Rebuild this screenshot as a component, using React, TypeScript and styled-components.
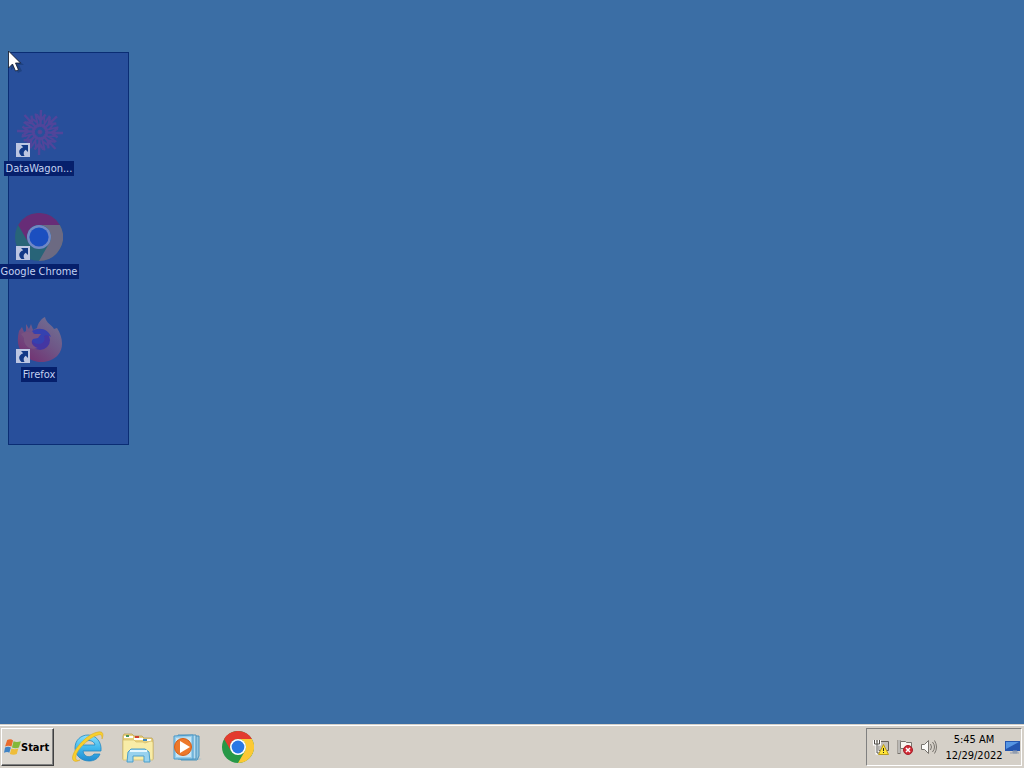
import React from "react";
import styled, { createGlobalStyle } from "styled-components";

const GlobalStyle = createGlobalStyle`
  * { box-sizing: border-box; }
  body { margin: 0; overflow: hidden; background: #3b6ea5; }
  button, a { font: inherit; color: inherit; }
`;

const Screen = styled.div`
  display: flex;
  flex-direction: column;
  height: 100vh;
  font-family: "DejaVu Sans Condensed", Tahoma, sans-serif;
  font-size: 11px;
  line-height: 15px;
`;

const Desktop = styled.main`
  position: relative;
  flex: 1;
  min-height: 0;
  background: #3b6ea5;
`;

const Marquee = styled.div`
  position: absolute;
  left: 8px;
  top: 52px;
  width: 121px;
  height: 393px;
  background: #284f9b;
  border: 1px solid #0a2d74;
`;

const Pointer = styled.svg`
  position: absolute;
  left: 8px;
  top: 50px;
  width: 16px;
  height: 24px;
`;

const Shortcuts = styled.nav`
  position: relative;
  display: flex;
  flex-direction: column;
  align-items: flex-start;
  gap: 37px;
  padding-top: 110px;
`;

const Shortcut = styled.a`
  display: flex;
  flex-direction: column;
  align-items: center;
  gap: 3px;
  width: 78px;
  text-decoration: none;
`;

const ShortcutIcon = styled.svg`
  width: 48px;
  height: 48px;
`;

const ShortcutLabel = styled.span`
  padding: 0 2px;
  white-space: nowrap;
  color: #c3d2f2;
  background: #06206c;
`;

const Taskbar = styled.footer`
  display: flex;
  align-items: stretch;
  height: 44px;
  padding: 3px 2px 2px 1px;
  background: #d5d0c8;
  border-top: 1px solid #d5d0c8;
  box-shadow: inset 0 1px #ffffff;
`;

const StartButton = styled.button`
  display: flex;
  align-items: center;
  width: 53px;
  padding: 0 2px;
  font-weight: bold;
  color: #000;
  background: #dad6cf;
  border: 1px solid;
  border-color: #fff #404040 #404040 #fff;
  box-shadow: inset -1px -1px #808080;
`;

const StartLogo = styled.svg`
  flex: none;
  width: 17px;
  height: 17px;
`;

const QuickLaunch = styled.div`
  display: flex;
  align-items: center;
  gap: 18px;
  margin-left: 18px;
`;

const LaunchButton = styled.button`
  display: flex;
  width: 32px;
  height: 32px;
  padding: 0;
  border: 0;
  background: none;
  svg { width: 32px; height: 32px; }
`;

const Tray = styled.div`
  display: flex;
  align-items: center;
  margin-left: auto;
  padding-left: 6px;
  border: 1px solid;
  border-color: #808080 #fff #fff #808080;
`;

const TrayIcons = styled.div`
  display: flex;
  gap: 8px;
`;

const TrayButton = styled.button`
  display: flex;
  width: 16px;
  height: 16px;
  padding: 0;
  border: 0;
  background: none;
  svg { width: 16px; height: 16px; }
`;

const Clock = styled.time`
  width: 58px;
  margin: 2px 2px 0 8px;
  line-height: 16px;
  text-align: center;
  color: #000;
`;

const ShortcutBadge = () => (
  <g>
    <path d="M1 33h14v14H1z" fill="#bcc6e2" />
    <path d="M6 35h7v7l-2.300-2.300C8.500 41 8 43.500 9.500 46H6.500C3 43 3.500 39 8.200 37.300z" fill="#123987" />
  </g>
);

const DataWagonIcon = () => (
  <ShortcutIcon viewBox="0 0 48 48" aria-hidden="true">
    <g stroke="#67409a" fill="none" opacity=".65">
      {Array.from({ length: 16 }, (_, i) => (
        <g key={i} transform={`rotate(${i * 22.5 + 5} 25 22)`}>
          <path
            d={i % 2 ? "M25 17l1-14m-1 9l-4-6m4 2l3-4" : "M25 17l-1-18m1 12l-4-5m4 4l4-6"}
            strokeWidth={i % 2 ? 1.8 : 2.4}
          />
        </g>
      ))}
      <circle cx="25" cy="22" r="7" strokeWidth="2.5" />
      <circle cx="25" cy="22" r="2" fill="#74418e" />
    </g>
    <ShortcutBadge />
  </ShortcutIcon>
);

const ChromeShape = ({ faded }: { faded?: boolean }) => {
  const [red, yellow, green, ring, blue] = faded
    ? ["#672c77", "#6c6a82", "#286478", "#7188c5", "#1b4fc0"]
    : ["#e33b2e", "#fcc934", "#279847", "#ffffff", "#2878e5"];
  return (
    <>
      <circle cx="24" cy="24" r="24" fill={green} />
      <path d="M3.2 12A24 24 0 0 1 44.8 12H24a12 12 0 0 0-10.4 18z" fill={red} />
      <path d="M24 12h20.8A24 24 0 0 1 24 48l10.4-18A12 12 0 0 0 24 12z" fill={yellow} />
      <circle cx="24" cy="24" r="12" fill={ring} />
      <circle cx="24" cy="24" r="9.6" fill={blue} />
    </>
  );
};

const ChromeShortcutIcon = () => (
  <ShortcutIcon viewBox="0 0 48 48" aria-hidden="true">
    <ChromeShape faded />
    <ShortcutBadge />
  </ShortcutIcon>
);

const FirefoxIcon = () => (
  <ShortcutIcon viewBox="0 0 48 48" aria-hidden="true">
    <defs>
      <linearGradient id="fox" x1="1" y1="0" x2="0.2" y2="1">
        <stop offset="0" stopColor="#707696" />
        <stop offset=".5" stopColor="#6f5787" />
        <stop offset="1" stopColor="#732f70" />
      </linearGradient>
    </defs>
    <path d="M30 1c1 6 7 8 9 12l3-1c6 9 7 20 1 27-9 10-26 9-35-1-6-7-6-15-4-23l3-4 2 5 2-1V8l3 5 2-5 2 6 4-2c1-5 4-9 8-11z" fill="url(#fox)" />
    <circle cx="25" cy="24" r="10" fill="#4436a2" />
    <path d="M17 15c8-5 17-1 19 6-3-2-5-2-7-1 2 4-1 8-5 8-5 0-8-3-8-6l7-2c-1-2-4-2-6-5z" fill="#3541b0" />
    <path d="M6 18c6-3 10-2 14 0h6l-3 4-5 1c-3 3 0 8 5 9-8 3-15-3-14-10z" fill="#785281" />
    <ShortcutBadge />
  </ShortcutIcon>
);

const WindowsLogo = () => (
  <StartLogo viewBox="0 0 16 16" aria-hidden="true">
    <path d="M3 1c2-1 4-1 5.500.300L7 7C5 6 3 6 1 7z" fill="#e96b2c" />
    <path d="M9 2c2 1 4 1 7 0l-2 6c-2 1-4 1-6.500 0z" fill="#83b83b" />
    <path d="M1 8c2-1 4-1 5.500 0L5 13c-1-1-3-1-5 0z" fill="#3f83c5" />
    <path d="M7 9c2 1 4 1 6.500 0L12 14c-2 1-4 1-6.500 0z" fill="#efbd38" />
  </StartLogo>
);

const ExplorerBrowserIcon = () => (
  <svg viewBox="0 0 32 32" aria-hidden="true">
    <defs>
      <linearGradient id="ie" x1="0" y1="0" x2="0" y2="1">
        <stop offset="0" stopColor="#8be0fa" />
        <stop offset=".5" stopColor="#41b8ed" />
        <stop offset="1" stopColor="#218bd0" />
      </linearGradient>
    </defs>
    <path d="M29 20H11c1 7 8 7 11 3h6c-2 5-6 7-11 7C9 30 3 24 3 17 3 9 9 4 16 4c8 0 14 7 13 16zM11 14h12c-1-6-11-6-12 0z" fill="url(#ie)" stroke="#2388c2" strokeWidth=".8" />
    <path d="M8 29c-5 3-9 1-7-5C4 15 17 2 26 1c5-1 6 2 4 7 0-4-1-5-4-4C18 6 5 18 4 25c-1 4 1 5 4 4z" fill="#f8cf2d" stroke="#d9a51d" strokeWidth=".5" />
  </svg>
);

const FolderIcon = () => (
  <svg viewBox="0 0 32 32" aria-hidden="true">
    <path d="M1 5l1-2h8l2 2h8l2 2h8l1 2v19H1z" fill="#ead37f" stroke="#b99c4b" strokeWidth=".7" />
    <path d="M2 5h9v2H2zM12 7h9v2h-9zM21 8h8v2h-8z" fill="#fff" />
    <path d="M4 4h3v2H4z" fill="#48925b" />
    <path d="M13 5h4v2h-4z" fill="#cf4030" />
    <path d="M21 8h4v2h-4z" fill="#408abc" />
    <path d="M1 9h11l2 2h7l2 1 6-2 2 1v18H1z" fill="#f8eca7" stroke="#d3bb68" strokeWidth=".7" />
    <path d="M5 31l1-10 3-3h14l4 3 1 10h-6v-6H11v6z" fill="#97d2ee" stroke="#4a9fcb" />
    <path d="M8 20h17" stroke="#e3f7ff" strokeWidth="2" />
  </svg>
);

const MediaPlayerIcon = () => (
  <svg viewBox="0 0 32 32" aria-hidden="true">
    <path d="M24 27l6 1-5 1z" fill="#9bbdca" />
    <path d="M9 5h18v20l-2 4H9z" fill="#8fc4e1" stroke="#4a91ba" />
    <path d="M6 4h18v24H6z" fill="#b7dcf0" stroke="#4a91ba" />
    <path d="M2 5l19-1v24H2z" fill="#98cdea" stroke="#4b9aca" />
    <path d="M4 7l15-1v20H4z" fill="#c5e5f5" />
    <circle cx="11" cy="16" r="8.500" fill="#ed782a" stroke="#d65e16" />
    <path d="M8 10l10 6-10 6z" fill="#fff" />
  </svg>
);

const ChromeIcon = () => (
  <svg viewBox="0 0 48 48" aria-hidden="true">
    <ChromeShape />
  </svg>
);

const NetworkIcon = () => (
  <svg viewBox="0 0 16 16" aria-hidden="true">
    <path d="M5.5 2.5h10v9h-10z" fill="#c2bfb8" stroke="#66625c" />
    <path d="M1.500 1v4h5V1M4 5v9h4" fill="none" stroke="#fff" strokeWidth="3" />
    <path d="M1.500 1v4h5V1M4 1v13h4" fill="none" stroke="#514e49" />
    <path d="M10.500 5.500l5 10h-10z" fill="#ffe536" stroke="#b89b20" />
    <path d="M10.500 9v3m0 1v1" stroke="#222" />
  </svg>
);

const ActionCenterIcon = () => (
  <svg viewBox="0 0 16 16" aria-hidden="true">
    <path d="M2 1v14" stroke="#77736d" strokeWidth="3" />
    <path d="M2 1v13" stroke="#fff" />
    <path d="M3.500 2.500h5l1 1h5v7h-5l-1-1h-5z" fill="#f7f5ef" stroke="#77736d" />
    <circle cx="11" cy="11" r="4.500" fill="#d22b35" stroke="#a4212b" />
    <path d="M9 9l4 4m0-4l-4 4" stroke="#fff" strokeWidth="1.500" />
  </svg>
);

const VolumeIcon = () => (
  <svg viewBox="0 0 16 16" aria-hidden="true">
    <path d="M.5 5.500h3l4-4v13l-4-4h-3z" fill="#fbfaf7" stroke="#77736d" />
    <path d="M9.500 5q2 3 0 6M11.500 3q4 5 0 10M13.500 1.500q4 6.500 0 13" fill="none" stroke="#77736d" />
  </svg>
);

const ShowDesktopIcon = () => (
  <svg viewBox="0 0 16 16" aria-hidden="true">
    <path d="M0 2h15v10H0z" fill="#2456b0" />
    <path d="M1 3h13L1 10z" fill="#5595e3" />
    <path d="M8 12h4v2H8zM5 14h9" fill="#929daf" stroke="#929daf" />
  </svg>
);

const shortcuts = [
  { label: "DataWagon...", Icon: DataWagonIcon },
  { label: "Google Chrome", Icon: ChromeShortcutIcon },
  { label: "Firefox", Icon: FirefoxIcon },
];

const launchers = [
  { label: "Internet Explorer", Icon: ExplorerBrowserIcon },
  { label: "Windows Explorer", Icon: FolderIcon },
  { label: "Windows Media Player", Icon: MediaPlayerIcon },
  { label: "Google Chrome", Icon: ChromeIcon },
];

const trayItems = [
  { label: "Network", Icon: NetworkIcon },
  { label: "Action Center", Icon: ActionCenterIcon },
  { label: "Volume", Icon: VolumeIcon },
];

export default function App() {
  return (
    <Screen>
      <GlobalStyle />
      <Desktop>
        <Marquee />
        <Shortcuts aria-label="Desktop">
          {shortcuts.map(({ label, Icon }) => (
            <Shortcut key={label} href="#">
              <Icon />
              <ShortcutLabel>{label}</ShortcutLabel>
            </Shortcut>
          ))}
        </Shortcuts>
        <Pointer viewBox="0 0 16 24" aria-hidden="true">
          <path d="M3 4v16l4-3 3 6 4-2-3-6h5z" fill="#173a72" opacity=".6" />
          <path d="M.5 1v17l4-4 3 7 3-1-3-7h5z" fill="#fff" stroke="#101828" strokeWidth=".8" />
        </Pointer>
      </Desktop>
      <Taskbar>
        <StartButton>
          <WindowsLogo />
          Start
        </StartButton>
        <QuickLaunch>
          {launchers.map(({ label, Icon }) => (
            <LaunchButton key={label} aria-label={label}>
              <Icon />
            </LaunchButton>
          ))}
        </QuickLaunch>
        <Tray>
          <TrayIcons>
            {trayItems.map(({ label, Icon }) => (
              <TrayButton key={label} aria-label={label}>
                <Icon />
              </TrayButton>
            ))}
          </TrayIcons>
          <Clock>
            5:45 AM
            <br />
            12/29/2022
          </Clock>
          <TrayButton aria-label="Show desktop">
            <ShowDesktopIcon />
          </TrayButton>
        </Tray>
      </Taskbar>
    </Screen>
  );
}
